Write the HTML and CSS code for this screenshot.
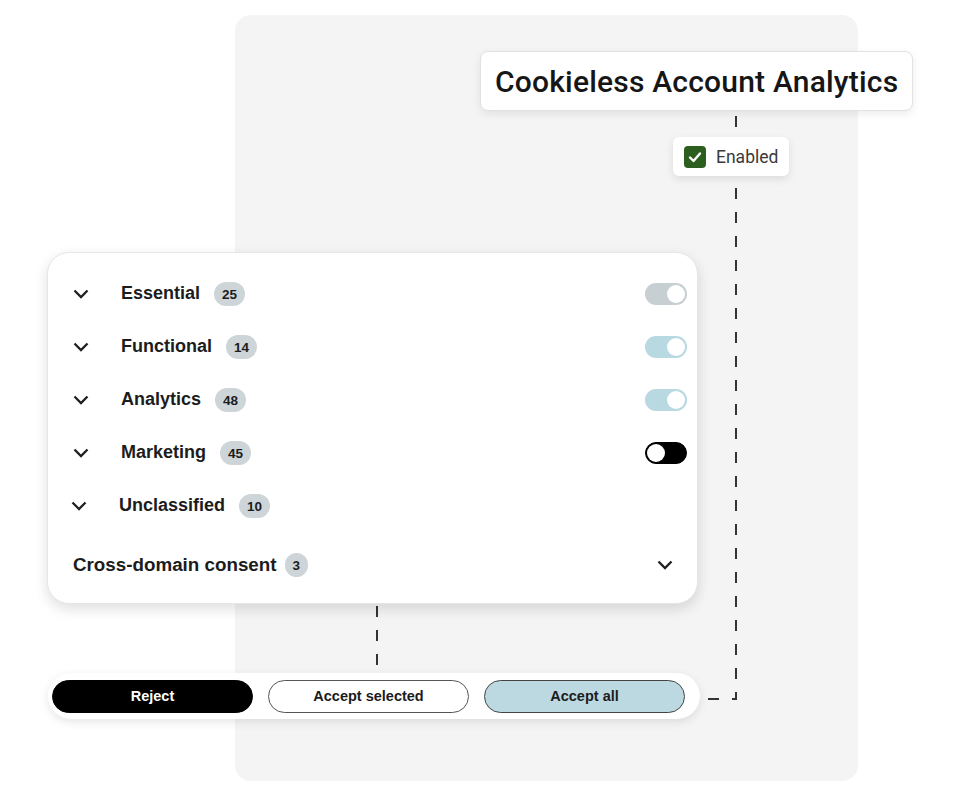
FILE: index.html
```html
<!DOCTYPE html>
<html lang="en">
<head>
  <meta charset="UTF-8" />
  <meta name="viewport" content="width=device-width, initial-scale=1.0"/>
  <title>Consent Preferences</title>
  <link rel="stylesheet" href="styles.css">
</head>
<body>

  <div class="stage">
    <div class="panel"></div>

    <!-- connectors -->
    <svg class="links" width="953" height="799" viewBox="0 0 953 799">
      <path class="long" d="M736 112 V699 H700" />
      <path d="M377 606 V670" />
    </svg>

    <div class="title-box">Cookieless Account Analytics</div>

    <div class="status">
      <span class="check">
        <svg width="22" height="22" viewBox="0 0 22 22"><path d="M6 11.5 L9.5 15 L16 7.5" /></svg>
      </span>
      Enabled
    </div>

    <div class="card">
      <div class="row">
        <span class="chevron"><svg width="16" height="10" viewBox="0 0 16 10"><path d="M1.5 1.5 L8 8 L14.5 1.5" /></svg></span>
        <span class="label">Essential</span>
        <span class="count">25</span>
        <span class="toggle locked"></span>
      </div>
      <div class="row">
        <span class="chevron"><svg width="16" height="10" viewBox="0 0 16 10"><path d="M1.5 1.5 L8 8 L14.5 1.5" /></svg></span>
        <span class="label">Functional</span>
        <span class="count">14</span>
        <span class="toggle on"></span>
      </div>
      <div class="row">
        <span class="chevron"><svg width="16" height="10" viewBox="0 0 16 10"><path d="M1.5 1.5 L8 8 L14.5 1.5" /></svg></span>
        <span class="label">Analytics</span>
        <span class="count">48</span>
        <span class="toggle on"></span>
      </div>
      <div class="row">
        <span class="chevron"><svg width="16" height="10" viewBox="0 0 16 10"><path d="M1.5 1.5 L8 8 L14.5 1.5" /></svg></span>
        <span class="label">Marketing</span>
        <span class="count">45</span>
        <span class="toggle off"></span>
      </div>
      <div class="row shifted">
        <span class="chevron"><svg width="16" height="10" viewBox="0 0 16 10"><path d="M1.5 1.5 L8 8 L14.5 1.5" /></svg></span>
        <span class="label">Unclassified</span>
        <span class="count">10</span>
      </div>
      <div class="row cross">
        <span class="label">Cross-domain consent</span>
        <span class="count small">3</span>
        <span class="chevron end"><svg width="16" height="10" viewBox="0 0 16 10"><path d="M1.5 1.5 L8 8 L14.5 1.5" /></svg></span>
      </div>
    </div>

    <div class="actions">
      <button class="btn reject">Reject</button>
      <button class="btn select">Accept selected</button>
      <button class="btn all">Accept all</button>
    </div>
  </div>

</body>
</html>
```

FILE: styles.css
```css
body {
  margin: 0;
  background: #fff;
  font-family: 'Liberation Sans', Arial, sans-serif;
  color: #1c1c1c;
}

.stage {
  position: relative;
  width: 953px;
  height: 799px;
  overflow: hidden;
}

.panel {
  position: absolute;
  left: 235px;
  top: 15px;
  width: 623px;
  height: 766px;
  background: #f4f4f4;
  border-radius: 16px;
}

.links {
  position: absolute;
  left: 0;
  top: 0;
}

.links path {
  fill: none;
  stroke: #333;
  stroke-width: 2;
  stroke-dasharray: 11 13;
}

.links path.long {
  stroke-dashoffset: 20;
}

.title-box {
  position: absolute;
  left: 480px;
  top: 51px;
  width: 433px;
  height: 60px;
  box-sizing: border-box;
  display: flex;
  align-items: center;
  padding-left: 14px;
  background: #fff;
  border: 1px solid #e2e2e2;
  border-radius: 8px;
  box-shadow: 0 3px 8px rgba(0,0,0,0.08);
  font-family: Roboto, 'Noto Sans', sans-serif;
  font-weight: 500;
  font-size: 30px;
  letter-spacing: 0.2px;
  color: #161616;
}

.status {
  position: absolute;
  left: 673px;
  top: 137px;
  width: 116px;
  height: 39px;
  box-sizing: border-box;
  display: flex;
  align-items: center;
  gap: 10px;
  padding-left: 11px;
  background: #fff;
  border-radius: 6px;
  box-shadow: 0 3px 8px rgba(0,0,0,0.1);
  font-family: Roboto, 'Noto Sans', sans-serif;
  font-size: 17.5px;
  color: #3a3a3a;
}

.check {
  width: 22px;
  height: 22px;
  border-radius: 4px;
  background: #2c5f1f;
  display: flex;
}

.check path {
  fill: none;
  stroke: #fff;
  stroke-width: 2.4;
  stroke-linecap: round;
  stroke-linejoin: round;
}

/* Card */
.card {
  position: absolute;
  left: 47px;
  top: 252px;
  width: 651px;
  height: 352px;
  box-sizing: border-box;
  padding: 14px 10px 0 25px;
  background: #fff;
  border: 1px solid #e6e6e6;
  border-radius: 22px;
  box-shadow: 0 5px 14px rgba(0,0,0,0.13);
}

.row {
  height: 53px;
  display: flex;
  align-items: center;
}

.row.shifted {
  margin-left: -2px;
}

.row.cross {
  margin-top: 6px;
  padding-right: 14px;
}

.chevron {
  display: flex;
  width: 16px;
  margin-right: 32px;
}

.chevron path {
  fill: none;
  stroke: #1f1f1f;
  stroke-width: 2.3;
}

.chevron.end {
  margin: 0 0 0 auto;
}

.label {
  font-weight: bold;
  font-size: 18px;
  color: #1c1c1c;
}

.cross .label {
  font-size: 18.8px;
}

.count {
  margin-left: 14px;
  height: 24px;
  min-width: 15px;
  padding: 0 8px;
  border-radius: 12px;
  background: #cdd5d8;
  font-weight: bold;
  font-size: 13.5px;
  line-height: 25px;
  text-align: center;
}

.count.small {
  margin-left: 8px;
  min-width: 7px;
}

.toggle {
  margin-left: auto;
  position: relative;
  width: 42px;
  height: 22px;
  box-sizing: border-box;
  border-radius: 11px;
}

.toggle::after {
  content: '';
  position: absolute;
  top: 2px;
  right: 2px;
  width: 18px;
  height: 18px;
  border-radius: 50%;
  background: #fff;
}

.toggle.locked {
  background: #c7cfd2;
}

.toggle.on {
  background: #b8d8e2;
}

.toggle.off {
  background: #000;
  border: 1px solid #000;
}

.toggle.off::after {
  top: 1px;
  right: auto;
  left: 1px;
}

/* Buttons */
.actions {
  position: absolute;
  left: 48px;
  top: 673px;
  width: 652px;
  height: 46px;
  box-sizing: border-box;
  display: flex;
  align-items: center;
  gap: 15px;
  padding: 0 4px;
  background: #fff;
  border-radius: 23px;
  box-shadow: 0 3px 10px rgba(0,0,0,0.1);
}

.btn {
  width: 201px;
  height: 33px;
  border-radius: 17px;
  border: 1.5px solid #555;
  background: #fff;
  font-family: 'Liberation Sans', Arial, sans-serif;
  font-weight: bold;
  font-size: 14.5px;
  color: #1c1c1c;
  cursor: pointer;
}

.btn.reject {
  background: #000;
  border-color: #000;
  color: #fff;
}

.btn.all {
  background: #bcd8e1;
  border-color: #444;
}
```
